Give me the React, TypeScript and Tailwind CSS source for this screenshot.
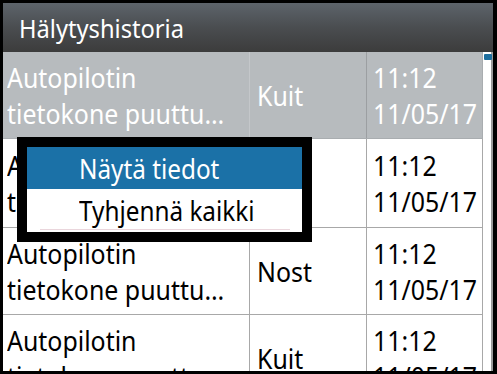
function T({ children, s = "scale-x-[0.89]" }: { children: React.ReactNode; s?: string }) {
  return <span className={`inline-block origin-left whitespace-nowrap ${s}`}>{children}</span>;
}

export default function App() {
  const rows = [
    { status: "Kuit", selected: true, h: "h-[87px]" },
    { status: "", selected: false, h: "h-[89px]" },
    { status: "Nost", selected: false, h: "h-[87px]" },
    { status: "Kuit", selected: false, h: "h-[87px]" },
  ];
  return (
    <div className="w-[497px] h-[374px] bg-black pt-[3px] pl-[3px] pr-[4px] pb-[3px] font-['Noto_Sans',sans-serif]">
      <div className="relative w-full h-full bg-white overflow-hidden flex flex-col">
        <div className="h-[49px] shrink-0 bg-gradient-to-b from-[#5d646b] via-[#4a4d50] to-[#3c3c3c] flex items-center pl-[16px] text-white text-[26px] leading-none">
          <T s="scale-x-[0.91]">Hälytyshistoria</T>
        </div>
        <div className="flex flex-1 min-h-0">
          <div className="w-[480px] shrink-0 flex flex-col">
            {rows.map((r, i) => (
              <div
                key={i}
                className={`${r.h} shrink-0 grid grid-cols-[247px_117px_116px] border-b ${
                  r.selected ? "bg-[#b7bbbe] text-white border-[#a9adb0]" : "bg-white text-black border-[#a8a8a8]"
                } text-[28px] leading-[36px]`}
              >
                <div className={`flex flex-col justify-center pl-[4px] border-r overflow-hidden ${r.selected ? "border-[#c4c7ca]" : "border-[#a8a8a8]"}`}>
                  <div><T>Autopilotin</T></div>
                  <div><T>tietokone puuttu…</T></div>
                </div>
                <div className={`flex items-center pl-[7px] border-r overflow-hidden ${r.selected ? "border-[#9c9fa2]" : "border-[#a8a8a8]"}`}>
                  <T>{r.status}</T>
                </div>
                <div className={`flex flex-col justify-center pl-[6px] border-r overflow-hidden ${r.selected ? "border-[#a9adb0]" : "border-[#a8a8a8]"}`}>
                  <div><T>11:12</T></div>
                  <div><T>11/05/17</T></div>
                </div>
              </div>
            ))}
          </div>
          <div className="flex-1 relative bg-white border-r-[2px] border-[#9a9a9a]">
            <div className="absolute left-[1px] top-[2px] w-[8px] h-[6px] bg-[#1e6f9f] rounded-[1px]" />
          </div>
        </div>
        <div className="absolute left-[14px] top-[134px] w-[295px] h-[105px] border-[10px] border-black bg-white flex flex-col text-[27px] leading-none">
          <div className="h-[42px] shrink-0 bg-[#1b71a7] text-white flex items-center pl-[52px]">
            <T s="scale-x-[0.9]">Näytä tiedot</T>
          </div>
          <div className="flex-1 relative flex items-center pl-[52px] text-black">
            <T s="scale-x-[0.9]">Tyhjennä kaikki</T>
            <div className="absolute left-[13px] right-[12px] bottom-[2px] h-[1px] bg-[#ead6dc]" />
          </div>
        </div>
      </div>
    </div>
  );
}
